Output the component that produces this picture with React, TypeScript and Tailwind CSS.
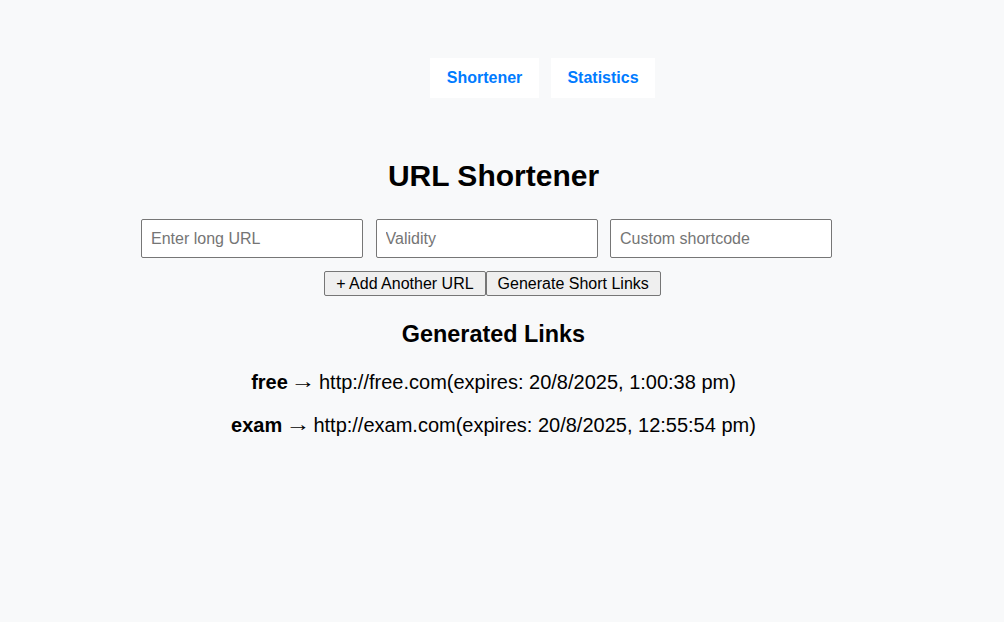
import React from "react";

const links = [
  { code: "free", url: "http://free.com", expires: "20/8/2025, 1:00:38 pm" },
  { code: "exam", url: "http://exam.com", expires: "20/8/2025, 12:55:54 pm" },
];

export default function App() {
  return (
    <div
      className="min-h-[622px] w-full bg-[#f8f9fa] text-black"
      style={{ fontFamily: '"Liberation Sans", Arial, sans-serif' }}
    >
      <div className="w-[987px] flex flex-col">
        <nav className="flex justify-center gap-[12px] pl-[98px] pt-[58px]">
          <button className="h-[40px] w-[109px] bg-white text-[16px] font-bold text-[#007bff]">
            Shortener
          </button>
          <button className="h-[40px] w-[104px] bg-white text-[16px] font-bold text-[#007bff]">
            Statistics
          </button>
        </nav>

        <h2 className="mt-[61px] text-center text-[30px] font-bold leading-[34px]">
          URL Shortener
        </h2>

        <div className="mt-[26px] flex justify-center gap-[12.5px] pr-[14px]">
          <input
            placeholder="Enter long URL"
            className="h-[39px] w-[222px] rounded-[2px] border border-[#767676] bg-white px-[9px] text-[16px] outline-none placeholder:text-[#757575]"
          />
          <input
            placeholder="Validity"
            className="h-[39px] w-[222px] rounded-[2px] border border-[#767676] bg-white px-[9px] text-[16px] outline-none placeholder:text-[#757575]"
          />
          <input
            placeholder="Custom shortcode"
            className="h-[39px] w-[222px] rounded-[2px] border border-[#767676] bg-white px-[9px] text-[16px] outline-none placeholder:text-[#757575]"
          />
        </div>

        <div className="mt-[13px] flex justify-center pr-[2px]">
          <button className="flex h-[25px] items-center rounded-[2px] border border-[#767676] bg-[#efefef] px-[11px] text-[16px] leading-[18px]">
            + Add Another URL
          </button>
          <button className="flex h-[25px] items-center rounded-[2px] border border-[#767676] bg-[#efefef] px-[11px] text-[16px] leading-[18px]">
            Generate Short Links
          </button>
        </div>

        <h3 className="mt-[25px] text-center text-[23.4px] font-bold leading-[27px]">
          Generated Links
        </h3>

        <div className="mt-[23px] flex flex-col gap-[20px]">
          {links.map((l) => (
            <p key={l.code} className="text-center text-[20px] leading-[23px]">
              <strong className="font-bold">{l.code}</strong>{" "}
              <span className="inline-block scale-x-125 -translate-y-[1px]">→</span>{" "}
              {l.url}(expires: {l.expires})
            </p>
          ))}
        </div>
      </div>
    </div>
  );
}
